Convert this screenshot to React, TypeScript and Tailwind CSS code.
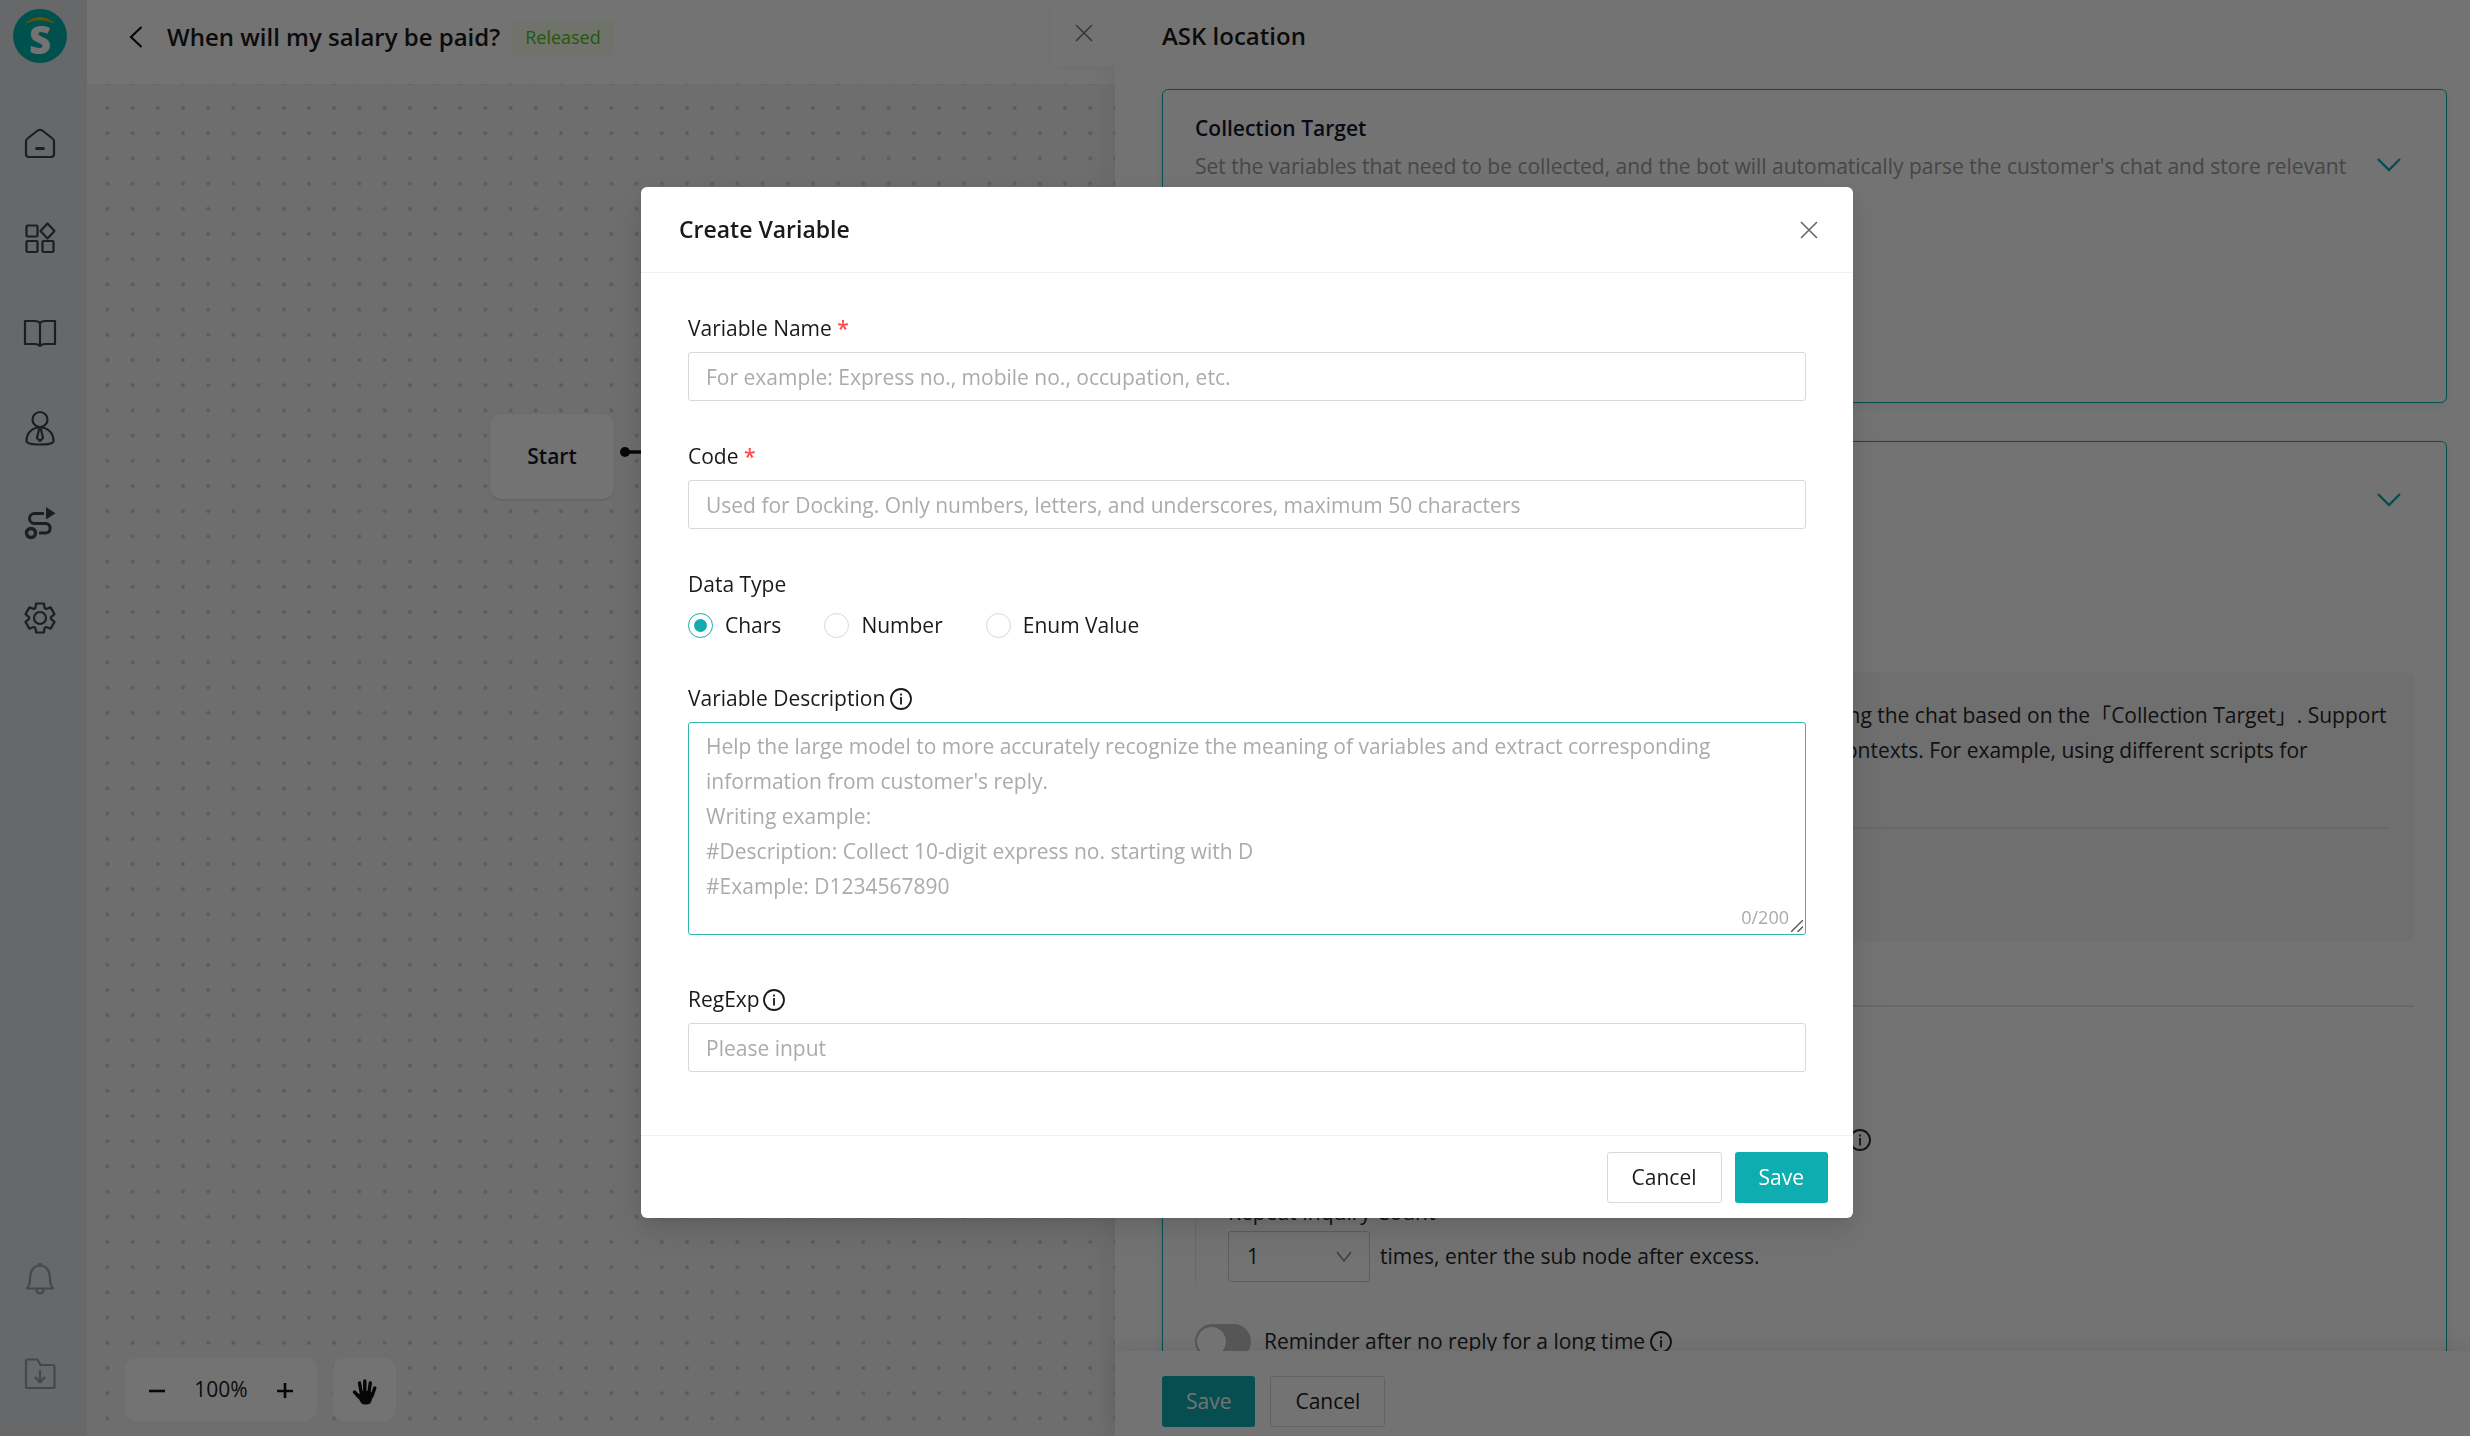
import { useState, type ReactNode } from 'react';

const DATA_TYPES = ['Chars', 'Number', 'Enum Value'] as const;
type DataType = (typeof DATA_TYPES)[number];

const DESCRIPTION_LIMIT = 200;
const DESCRIPTION_HINT = `Help the large model to more accurately recognize the meaning of variables and extract corresponding information from customer's reply.
Writing example:
#Description: Collect 10-digit express no. starting with D
#Example: D1234567890`;

const fieldClasses =
  'w-full rounded-[3px] border bg-white px-[17px] text-[21px] text-[#1a1a1a] outline-none placeholder:text-[#a9abae]';
const primaryButton =
  'h-[51px] rounded-[3px] bg-[#0eaeb0] px-6 text-[21px] text-white';
const plainButton =
  'h-[51px] rounded-[3px] border border-[#d9d9d9] bg-white px-6 text-[21px] text-[#1a1a1a]';

// Six-toothed outline around (17, 17)
const gearPoints = Array.from({ length: 6 }, (_, tooth) => {
  const center = tooth * 60 - 90;
  return [
    [-25, 11],
    [-15, 15],
    [15, 15],
    [25, 11],
  ]
    .map(([offset, radius]) => {
      const angle = ((center + offset) * Math.PI) / 180;
      return `${17 + radius * Math.cos(angle)},${17 + radius * Math.sin(angle)}`;
    })
    .join(' ');
}).join(' ');

const NAV_ITEMS = [
  {
    icon: (
      <>
        <path d="M4.5 12.5 14 5q3-2.4 6 0l9.500 7.500q1.500 1.200 1.500 3V28q0 3-3 3H6q-3 0-3-3V15.500q0-1.800 1.500-3Z" />
        <path d="M12.500 22.500h9" strokeWidth={3} />
      </>
    ),
    label: 'Home',
  },
  {
    icon: (
      <>
        <rect height="11" rx="1" width="11" x="3.500" y="4.500" />
        <rect height="11" rx="1" width="11" x="3.500" y="20" />
        <rect height="11" rx="1" width="11" x="19.500" y="20" />
        <path d="m24.500 2.500 7 7.500-7 7.500-7-7.500Z" />
      </>
    ),
    label: 'Apps',
  },
  {
    icon: (
      <path d="M17 7q-2-2-5-2H2v23h10q3 0 5 2 2-2 5-2h10V5H22q-3 0-5 2Zm0 0v22" />
    ),
    label: 'Knowledge',
  },
  {
    icon: (
      <>
        <circle cx="17" cy="8.500" r="7.500" />
        <path d="M17 16.500C9 16.500 3.500 22 3.500 30q0 3.500 13.500 3.500T30.500 30c0-8-5.500-13.500-13.500-13.500Z" />
        <path d="m16 18.500-2 8.500 3 3 3-3-2-8.500Z" />
      </>
    ),
    label: 'Agents',
  },
  {
    icon: (
      <>
        <path
          d="M21 7.500h-9.500a5 5 0 0 0 0 10H23a4.800 4.800 0 0 1 0 9.500h-7"
          strokeWidth={3}
        />
        <circle cx="8" cy="27" r="4.500" strokeWidth={3.4} />
        <path d="M23 1v12.500l9.500-6.200Z" fill="currentColor" stroke="none" />
      </>
    ),
    label: 'Flows',
  },
  {
    icon: (
      <>
        <polygon points={gearPoints} />
        <circle cx="17" cy="17" r="6" />
      </>
    ),
    label: 'Settings',
  },
];

const FOOTER_ITEMS = [
  {
    icon: (
      <>
        <path d="M4 27.500c2-2.500 3-4 3-10 0-8 4-13 10-13s10 5 10 13c0 6 1 7.500 3 10Z" />
        <path d="M13.500 28v1a3.500 3.500 0 0 0 7 0v-1M15.500 3h3" />
      </>
    ),
    label: 'Notifications',
  },
  {
    icon: (
      <>
        <path d="M3 5q0-1.500 1.500-1.500h10l3 5.500h12.500q1.500 0 1.500 1.500v20q0 1.500-1.500 1.500h-25.500Q3 32 3 30.500Z" />
        <path d="M17 14v12m-5-5 5 5.500 5-5.500" />
      </>
    ),
    label: 'Downloads',
  },
];

const SideIcon = ({ children, label }: { children: ReactNode; label: string }) => (
  <button
    aria-label={label}
    className="flex h-[95px] w-full items-center justify-center"
    type="button"
  >
    <svg
      className="size-[34px] overflow-visible"
      fill="none"
      stroke="currentColor"
      strokeLinejoin="round"
      strokeWidth={2.2}
      viewBox="0 0 34 34"
    >
      {children}
    </svg>
  </button>
);

const InfoIcon = () => (
  <svg className="size-[22px] shrink-0" fill="none" viewBox="0 0 22 22">
    <circle cx="11" cy="11" r="10" stroke="currentColor" strokeWidth={1.8} />
    <path d="M11 9v7.500M11 5.500v2" stroke="currentColor" strokeWidth={1.8} />
  </svg>
);

const CloseIcon = () => (
  <svg className="size-[18px]" fill="none" viewBox="0 0 18 18">
    <path d="m1 1 16 16M17 1 1 17" stroke="currentColor" strokeWidth={1.7} />
  </svg>
);

const ChevronDown = () => (
  <svg className="h-[14px] w-[24px] shrink-0" fill="none" viewBox="0 0 24 14">
    <path d="m1 1 11 11L23 1" stroke="#0eaeb0" strokeWidth={2.4} />
  </svg>
);

const Switch = ({ id }: { id: string }) => (
  <input
    className="relative h-[35px] w-[56px] shrink-0 appearance-none rounded-full bg-[#bfbfbf] before:absolute before:top-[3px] before:left-[2px] before:size-[29px] before:rounded-full before:bg-white before:shadow-sm"
    id={id}
    role="switch"
    type="checkbox"
  />
);

const Sidebar = () => (
  <aside className="flex w-[87px] shrink-0 flex-col items-center bg-[#e4e7ea] pt-[9px] pr-[7px] pb-4 text-[#404346]">
    <div className="relative mb-8 flex size-[54px] shrink-0 items-center justify-center rounded-full bg-[#00b2ab]">
      <svg
        className="absolute top-[7px] left-[13px] h-[8px] w-[28px]"
        fill="none"
        viewBox="0 0 28 8"
      >
        <path d="M0 7Q14-4 28 7 14 0 0 7Z" fill="#f5b400" stroke="#f5b400" />
      </svg>
      <span className="pt-[6px] text-[38px] leading-none font-extrabold text-white">
        S
      </span>
    </div>
    {NAV_ITEMS.map((item) => (
      <SideIcon key={item.label} label={item.label}>
        {item.icon}
      </SideIcon>
    ))}
    <div className="mt-auto w-full text-[#9a9da0]">
      {FOOTER_ITEMS.map((item) => (
        <SideIcon key={item.label} label={item.label}>
          {item.icon}
        </SideIcon>
      ))}
    </div>
  </aside>
);

const Canvas = () => (
  <div className="relative min-h-0 flex-1 overflow-hidden bg-[#f3f3f3]">
    <svg className="absolute inset-0 size-full">
      <defs>
        <pattern
          height="25.2"
          id="dots"
          patternUnits="userSpaceOnUse"
          width="25.2"
          x="7.8"
          y="11.4"
        >
          <circle cx="12.6" cy="12.6" fill="#cbcbcb" r="2" />
        </pattern>
      </defs>
      <rect fill="url(#dots)" height="100%" width="100%" />
      <circle cx="538" cy="368" fill="#111" r="5" />
      <path d="M538 368h80" stroke="#111" strokeWidth={3.5} />
    </svg>

    <div className="absolute top-[330px] left-[403px] flex h-[85px] w-[124px] items-center justify-center rounded-xl bg-white text-[21px] font-semibold text-[#14172a] shadow-sm">
      Start
    </div>

    <div className="absolute bottom-[15px] left-[38px] flex gap-4">
      <div className="flex h-[63px] w-[192px] items-center justify-between rounded-xl bg-white px-6 text-[21px] text-[#1a1a1a]">
        <button aria-label="Zoom out" type="button">
          <svg className="size-4" viewBox="0 0 16 16">
            <path d="M0 9h16" stroke="#111" strokeWidth={2.6} />
          </svg>
        </button>
        <span>100%</span>
        <button aria-label="Zoom in" type="button">
          <svg className="size-4" viewBox="0 0 16 16">
            <path d="M0 9h16M8 1v16" stroke="#111" strokeWidth={2.6} />
          </svg>
        </button>
      </div>
      <button
        aria-label="Pan"
        className="flex h-[63px] w-[63px] items-center justify-center rounded-xl bg-white"
        type="button"
      >
        <svg className="mt-1 size-[26px]" viewBox="0 0 26 26">
          <path
            d="M2.500 13 7 18M7.500 4l2 11M12.800 2v12M18.300 4l-1.600 11M22.800 9 20 17"
            fill="none"
            stroke="#111"
            strokeLinecap="round"
            strokeWidth={3.4}
          />
          <path
            d="M4 14.500 8 15v-3h10l3.500 3-2 7q-1.200 3.500-5 3.500h-2q-2.500 0-4-2.500Z"
            fill="#111"
          />
        </svg>
      </button>
    </div>
  </div>
);

const Card = ({
  children,
  description,
  title,
}: {
  children: ReactNode;
  description: ReactNode;
  title: string;
}) => (
  <section className="shrink-0 rounded-md border border-[#0eaeb0] px-8 pt-[21px] shadow-[0_3px_10px_rgba(14,174,176,0.12)]">
    <div className="flex items-center justify-between pr-[13px] leading-[35px]">
      <div>
        <h3 className="font-semibold text-[#14172a]">{title}</h3>
        <p className="mt-[3px] w-[1168px] text-[#9c9c9c]">{description}</p>
      </div>
      <ChevronDown />
    </div>
    {children}
  </section>
);

const AskPanel = () => (
  <div className="relative flex w-[1355px] shrink-0 flex-col bg-white text-[21px] leading-[35px] text-[#262626] shadow-[-6px_0_24px_rgba(0,0,0,0.06)]">
    <button
      aria-label="Close panel"
      className="absolute top-0 -left-[63px] flex h-[66px] w-[63px] items-center justify-center bg-white text-[#7d7d7d] shadow-[-4px_4px_16px_rgba(0,0,0,0.03)]"
      type="button"
    >
      <CloseIcon />
    </button>
    <div className="flex min-h-0 flex-1 flex-col overflow-hidden pr-[23px] pl-[47px]">
      <h2 className="shrink-0 pt-[18px] pb-5 text-[24px] font-semibold text-[#1a1a1a]">
        ASK location
      </h2>
      <div className="mt-4 flex flex-col gap-[38px]">
        <Card
          description="Set the variables that need to be collected, and the bot will automatically parse the customer's chat and store relevant information into variables."
          title="Collection Target"
        >
          <div className="flex h-[183px] items-center">
            <button className={plainButton} type="button">
              Add Variable
            </button>
          </div>
        </Card>
        <Card
          description="Set how the bot asks the customer for variables."
          title="Inquiry Method"
        >
          <p className="h-[136px] pt-10">Inquiry Script</p>
          <div className="h-[269px] rounded-md bg-[#f7f7f7] px-[26px] pt-[26px]">
            <p className="h-[105px] whitespace-nowrap">
              The bot will automatically generate scripts for the customer during the chat based on the「Collection Target」. Support
              <br />
              custom prompts so bots can ask in different ways for different contexts. For example, using different scripts for
              <br />
              different customers.
            </p>
            <hr className="mt-6 border-t-2 border-[#e6e6e6]" />
            <p className="pt-6">Custom prompt</p>
          </div>
          <hr className="mt-16 border-t-2 border-[#e6e6e6]" />
          <div className="mt-[115px] flex items-center gap-[14px]">
            <Switch id="repeat" />
            <label className="w-[570px]" htmlFor="repeat">
              Repeat inquiry when not collected
            </label>
            <InfoIcon />
          </div>
          <div className="mt-4 border-l border-[#e6e6e6] pt-[22px] pl-8">
            <label className="block" htmlFor="count">
              Repeat Inquiry Count
            </label>
            <div className="mt-px flex items-center gap-[10px]">
              <div className="relative">
                <select
                  className="h-[51px] w-[142px] appearance-none rounded-[3px] border border-[#cfcfcf] bg-white px-[18px]"
                  defaultValue="1"
                  id="count"
                >
                  <option>1</option>
                  <option>2</option>
                  <option>3</option>
                </select>
                <svg
                  className="pointer-events-none absolute top-[20px] right-[18px] h-[12px] w-[16px]"
                  fill="none"
                  viewBox="0 0 16 12"
                >
                  <path d="m1 1 7 9 7-9" stroke="#8c8c8c" strokeWidth={1.6} />
                </svg>
              </div>
              <span>times, enter the sub node after excess.</span>
            </div>
          </div>
          <div className="mt-[42px] flex items-center pb-12">
            <Switch id="reminder" />
            <label className="mr-[5px] ml-[13px]" htmlFor="reminder">
              Reminder after no reply for a long time
            </label>
            <InfoIcon />
          </div>
        </Card>
      </div>
    </div>
    <div className="flex h-[85px] shrink-0 gap-[15px] bg-white px-[47px] pt-[25px] shadow-[0_-4px_20px_rgba(0,0,0,0.08)]">
      <button className={primaryButton} type="button">
        Save
      </button>
      <button className={plainButton} type="button">
        Cancel
      </button>
    </div>
  </div>
);

const RequiredMark = () => (
  <span className="font-semibold text-[#ff4d4f]">*</span>
);

const CreateVariableDialog = () => {
  const [dataType, setDataType] = useState<DataType>('Chars');
  const [description, setDescription] = useState('');

  return (
    <div className="fixed inset-0 flex items-start justify-center overflow-hidden bg-black/55 pt-[187px] pl-6">
      <div
        aria-labelledby="dialog-title"
        aria-modal="true"
        className="w-[1212px] rounded-md bg-white text-[21px] leading-[35px] text-[#1a1a1a] shadow-[0_5px_10px_-6px_rgba(0,0,0,0.12),0_10px_25px_rgba(0,0,0,0.08),0_14px_44px_13px_rgba(0,0,0,0.05)]"
        role="dialog"
      >
        <header className="flex h-[86px] items-center justify-between border-b border-[#f0f0f0] pr-[35px] pl-[38px]">
          <h2 className="text-[23px] font-semibold" id="dialog-title">
            Create Variable
          </h2>
          <button aria-label="Close" className="text-[#6b6b6b]" type="button">
            <CloseIcon />
          </button>
        </header>

        <form className="px-[47px] pt-[38px] pb-[63px]">
          <label className="block" htmlFor="name">
            Variable Name <RequiredMark />
          </label>
          <input
            className={`${fieldClasses} mt-[6px] h-[49px] border-[#d9d9d9]`}
            id="name"
            placeholder="For example: Express no., mobile no., occupation, etc."
          />

          <label className="mt-[38px] block" htmlFor="code">
            Code <RequiredMark />
          </label>
          <input
            className={`${fieldClasses} mt-[6px] h-[49px] border-[#d9d9d9]`}
            id="code"
            placeholder="Used for Docking. Only numbers, letters, and underscores, maximum 50 characters"
          />

          <fieldset className="mt-[38px]">
            <legend>Data Type</legend>
            <div className="mt-[6px] flex gap-[43px]">
              {DATA_TYPES.map((type) => (
                <label className="flex items-center gap-3" key={type}>
                  <input
                    checked={dataType === type}
                    className="flex size-[25px] appearance-none items-center justify-center rounded-full border border-[#d9d9d9] checked:border-[#0eaeb0] checked:before:size-[13px] checked:before:rounded-full checked:before:bg-[#0eaeb0]"
                    name="data-type"
                    onChange={() => setDataType(type)}
                    type="radio"
                  />
                  {type}
                </label>
              ))}
            </div>
          </fieldset>

          <label
            className="mt-[38px] flex items-center gap-[5px]"
            htmlFor="description"
          >
            Variable Description <InfoIcon />
          </label>
          <div className="relative mt-[6px]">
            <textarea
              className={`${fieldClasses} block h-[213px] resize-none border-[#2fb8b0] pt-[6px] leading-[35px]`}
              id="description"
              maxLength={DESCRIPTION_LIMIT}
              onChange={(event) => setDescription(event.target.value)}
              placeholder={DESCRIPTION_HINT}
              value={description}
            />
            <span className="absolute right-[17px] bottom-0 text-[18px] text-[#a9abae]">
              {description.length}/{DESCRIPTION_LIMIT}
            </span>
            <svg
              className="absolute right-[3px] bottom-[3px] size-3"
              viewBox="0 0 12 12"
            >
              <path
                d="M0 12 12 0M6.500 12 12 6.500"
                stroke="#555"
                strokeWidth={1.4}
              />
            </svg>
          </div>

          <label
            className="mt-[47px] flex items-center gap-[3px]"
            htmlFor="regexp"
          >
            RegExp <InfoIcon />
          </label>
          <input
            className={`${fieldClasses} mt-[6px] h-[49px] border-[#d9d9d9]`}
            id="regexp"
            placeholder="Please input"
          />
        </form>

        <footer className="flex justify-end gap-[13px] border-t border-[#f0f0f0] px-[25px] pt-4 pb-[15px]">
          <button className={plainButton} type="button">
            Cancel
          </button>
          <button className={primaryButton} type="button">
            Save
          </button>
        </footer>
      </div>
    </div>
  );
};

export default function App() {
  return (
    <div className="flex h-screen overflow-hidden bg-white font-['Open_Sans','Noto_Sans_CJK_SC',sans-serif]">
      <Sidebar />
      <main className="flex min-w-0 flex-1 flex-col">
        <header className="flex h-[84px] shrink-0 items-center bg-white pb-[10px] pl-[42px]">
          <a aria-label="Back" className="mr-6" href="#">
            <svg className="h-[22px] w-[14px]" fill="none" viewBox="0 0 14 22">
              <path d="M12.500 1 2 11l10.500 10" stroke="#111" strokeWidth={2.2} />
            </svg>
          </a>
          <h1 className="text-[24px] font-semibold whitespace-nowrap text-[#1a1a1a]">
            When will my salary be paid?
          </h1>
          <span className="ml-[12px] flex h-[35px] items-center rounded-[3px] bg-[#f6ffed] px-[13px] text-[18px] text-[#52c41a]">
            Released
          </span>
        </header>
        <Canvas />
      </main>
      <AskPanel />
      <CreateVariableDialog />
    </div>
  );
}
